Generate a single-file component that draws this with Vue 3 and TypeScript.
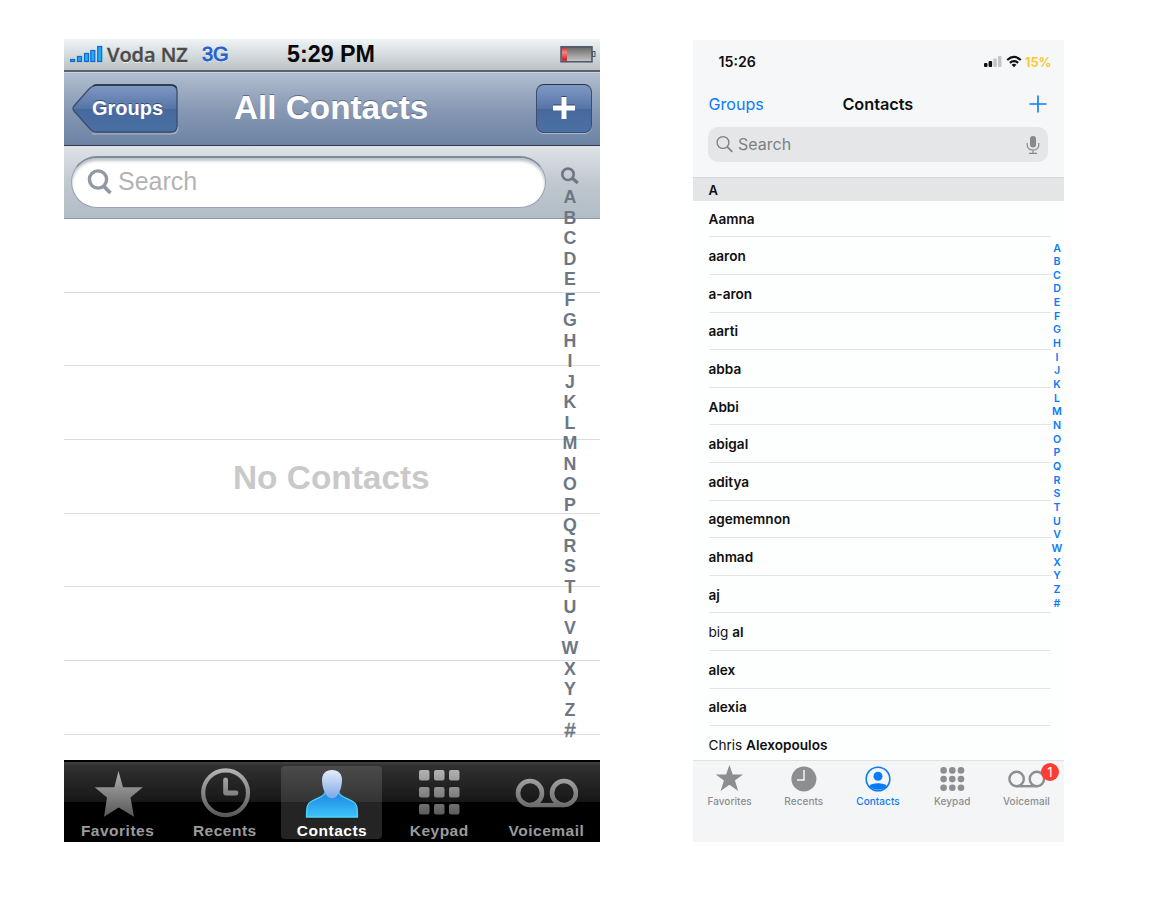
<script setup lang="ts">
interface Contact { first?: string; bold: string }

const letters: string[] = [...'ABCDEFGHIJKLMNOPQRSTUVWXYZ#']
const contacts: Contact[] = [
  { bold: 'Aamna' }, { bold: 'aaron' }, { bold: 'a-aron' }, { bold: 'aarti' },
  { bold: 'abba' }, { bold: 'Abbi' }, { bold: 'abigal' }, { bold: 'aditya' },
  { bold: 'agememnon' }, { bold: 'ahmad' }, { bold: 'aj' }, { first: 'big', bold: 'al' },
  { bold: 'alex' }, { bold: 'alexia' }, { first: 'Chris', bold: 'Alexopoulos' },
]
const tabs: string[] = ['Favorites', 'Recents', 'Contacts', 'Keypad', 'Voicemail']
const grid: number[] = [0, 1, 2, 3, 4, 5, 6, 7, 8]
</script>

<template>
  <main class="stage">
    <section class="classic">
      <header class="c-status">
        <svg class="c-bars" width="33" height="20" viewBox="0 0 33 20">
          <g fill="#1cabf5" stroke="#1668d0" stroke-width="1.200">
            <rect x=".6" y="14.500" width="4" height="2" /><rect x="7.500" y="11.500" width="4" height="5" />
            <rect x="14.500" y="8.500" width="4" height="8" /><rect x="20.800" y="5.500" width="4" height="11" />
            <rect x="27.700" y="1.500" width="4" height="15" />
          </g>
        </svg>
        <span class="c-carrier">Voda NZ</span>
        <span class="c-net">3G</span>
        <span class="c-time">5:29 PM</span>
        <svg class="c-batt" width="36" height="18" viewBox="0 0 36 18">
          <defs>
            <linearGradient id="bt" x1="0" y1="0" x2="0" y2="1"><stop offset="0" stop-color="#666" /><stop offset="1" stop-color="#c8c8c8" /></linearGradient>
            <linearGradient id="br" x1="0" y1="0" x2="0" y2="1"><stop offset="0" stop-color="#c33" /><stop offset=".35" stop-color="#e88" /><stop offset="1" stop-color="#c81818" /></linearGradient>
          </defs>
          <rect x="1" y="0.800" width="31" height="15" fill="url(#bt)" stroke="#4a5568" stroke-width="1.500" />
          <rect x="2" y="1.800" width="5" height="13" fill="url(#br)" />
          <rect x="32.500" y="5.500" width="2.500" height="5" fill="#ccd" stroke="#4a5568" />
        </svg>
      </header>

      <nav class="c-nav">
        <div class="c-back">
          <svg width="108" height="52" viewBox="0 0 108 52">
            <defs>
              <linearGradient id="bk" x1="0" y1="0" x2="0" y2="1">
                <stop offset="0" stop-color="#8099c3" /><stop offset=".5" stop-color="#5675a8" />
                <stop offset=".51" stop-color="#48689c" /><stop offset="1" stop-color="#4a70a5" />
              </linearGradient>
            </defs>
            <path d="M20 50H99Q106 50 106 43" fill="none" stroke="#a9b7cc" stroke-width="1.200" />
            <path d="M21 2Q23 1 25 1H99Q105 1 105 7V42Q105 48 99 48H25Q21 48 18 45L2 27Q0 24.500 2 22L17 5Q19 3 21 2Z" fill="url(#bk)" stroke="#3c4d6c" stroke-width="1.300" />
            <path d="M21 2Q23 1 25 1H99Q103 1 104.500 4" fill="none" stroke="#293547" stroke-width="1.600" />
          </svg>
          <span>Groups</span>
        </div>
        <h1>All Contacts</h1>
        <div class="c-add">
          <svg width="24" height="24" viewBox="0 0 24 24"><path d="M12 1V23M1 12H23" stroke="#30496f" stroke-width="5" transform="translate(0 -1)" /><path d="M12 1V23M1 12H23" stroke="#fff" stroke-width="5" /></svg>
        </div>
      </nav>

      <div class="c-search">
        <div class="c-field">
          <svg width="26" height="28" viewBox="0 0 26 28"><circle cx="11" cy="10.500" r="8.600" fill="none" stroke="#8f98a3" stroke-width="3.400" /><path d="M17 17.500L23.500 24" stroke="#8f98a3" stroke-width="3.800" /></svg>
          <span>Search</span>
        </div>
      </div>

      <div class="c-list">
        <div v-for="n in 7" :key="n" class="c-row"></div>
        <p>No Contacts</p>
      </div>

      <div class="c-index">
        <svg width="20" height="20" viewBox="0 0 20 20"><circle cx="8" cy="8.300" r="5.700" fill="none" stroke="#6d7783" stroke-width="2.600" /><path d="M12 12L17.800 17" stroke="#6d7783" stroke-width="3" /></svg>
        <span v-for="l in letters" :key="l" :class="{ hash: l === '#' }">{{ l }}</span>
      </div>

      <footer class="c-tabs">
        <div v-for="t in tabs" :key="t" class="c-tab" :class="{ on: t === 'Contacts' }">
          <svg width="64" height="54" viewBox="0 0 64 54">
            <defs>
              <linearGradient id="gr" gradientUnits="userSpaceOnUse" x1="0" y1="3" x2="0" y2="52"><stop offset="0" stop-color="#b4b4b4" /><stop offset="1" stop-color="#555" /></linearGradient>
              <linearGradient id="hd" x1="0" y1="0" x2="0" y2="1"><stop offset="0" stop-color="#e4edfb" /><stop offset="1" stop-color="#7fa6e6" /></linearGradient>
              <linearGradient id="bd" x1="0" y1="0" x2="0" y2="1"><stop offset="0" stop-color="#1b7fe0" /><stop offset="1" stop-color="#3cc4fb" /></linearGradient>
            </defs>
            <path v-if="t === 'Favorites'" fill="url(#gr)" d="M32.500 5L37 21.300H56.800L44.500 31.500L48 50.800L32.700 41.500L18 50.800L21 31.500L8.600 21.300H28.300Z" />
            <g v-else-if="t === 'Recents'" fill="none" stroke="url(#gr)">
              <circle cx="32.600" cy="26.700" r="22.400" stroke-width="4.200" />
              <path d="M32.600 14V27H43" stroke-width="4.800" stroke-linecap="round" stroke-linejoin="round" />
            </g>
            <g v-else-if="t === 'Contacts'">
              <path d="M25.500 25C25.500 30 19 31.500 12 35C7 37.500 6.500 41 6.500 51H57.500C57.500 41 57 37.500 52 35C45 31.500 38.500 30 38.500 25Z" fill="url(#bd)" stroke="#4cd4fa" stroke-width="1.300" />
              <path d="M32 4C38.500 4 42 8 42 14C42 21 39.500 27.500 36 31Q32 33.500 28 31C24.500 27.500 22 21 22 14C22 8 25.500 4 32 4Z" fill="url(#hd)" />
            </g>
            <g v-else-if="t === 'Keypad'" fill="url(#gr)">
              <path v-for="i in grid" :key="i" :d="`M${14 + (i % 3) * 15} ${4 + Math.floor(i / 3) * 17}h6.500q2 0 2 2v6.500q0 2-2 2h-6.500q-2 0-2-2v-6.500q0-2 2-2z`" />
            </g>
            <g v-else fill="none" stroke="url(#gr)" stroke-width="4.600">
              <circle cx="16" cy="27" r="12" /><circle cx="50" cy="27" r="12" /><path d="M16 39H50" />
            </g>
          </svg>
          <span>{{ t }}</span>
        </div>
      </footer>
    </section>

    <section class="modern">
      <header class="m-status">
        <span class="m-time">15:26</span>
        <svg width="39" height="14" viewBox="0 0 39 14">
          <g fill="#111"><rect x="0" y="8" width="3.500" height="4" rx="1" /><rect x="4.600" y="6" width="3.500" height="6" rx="1" /></g>
          <g fill="#c3c5c6"><rect x="9.300" y="3.500" width="3.500" height="8.500" rx="1" /><rect x="14" y="1" width="3.500" height="11" rx="1" /></g>
          <g fill="none" stroke="#111" stroke-width="2.300"><path d="M23.200 5Q30 -1.200 36.800 5" /><path d="M25.900 7.900Q30 4.300 34.100 7.900" /></g>
          <path d="M27.600 9.700Q30 7.700 32.400 9.700L30 12.200Z" fill="#111" />
        </svg>
        <span class="m-pct">15%</span>
      </header>
      <nav class="m-nav">
        <span class="m-groups">Groups</span>
        <h2>Contacts</h2>
        <svg width="18" height="18" viewBox="0 0 18 18"><path d="M9 .5V17.500M.5 9H17.500" stroke="#0b7bfa" stroke-width="1.600" /></svg>
      </nav>
      <div class="m-searchbar">
        <div class="m-search">
          <svg width="18" height="18" viewBox="0 0 18 18" fill="none" stroke="#808286" stroke-width="1.400"><circle cx="7" cy="7.500" r="5.900" /><path d="M11.300 11.800L16.300 16.800" stroke-width="1.700" /></svg>
          <span>Search</span>
          <svg class="m-mic" width="14" height="20" viewBox="0 0 14 20"><rect x="4" y="1" width="6" height="11.500" rx="3" fill="#88898d" /><path d="M1.200 8V9.500Q1.200 15 7 15Q12.800 15 12.800 9.500V8M7 15V18.300M3 18.300H11" fill="none" stroke="#88898d" stroke-width="1.200" /></svg>
        </div>
      </div>
      <div class="m-letter">A</div>
      <ul class="m-list">
        <li v-for="c in contacts" :key="c.bold"><span v-if="c.first">{{ c.first }}&nbsp;</span><b>{{ c.bold }}</b></li>
      </ul>
      <div class="m-index"><span v-for="l in letters" :key="l">{{ l }}</span></div>
      <footer class="m-tabs">
        <div v-for="t in tabs" :key="t" class="m-tab" :class="{ on: t === 'Contacts' }">
          <svg width="60" height="30" viewBox="0 0 60 30">
            <path v-if="t === 'Favorites'" fill="#8c8e8f" d="M29.400 1L32.700 10.400H43L34.900 16.500L38.200 27L29.400 20.700L20.600 27L23.900 16.500L15.800 10.400H26.100Z" />
            <g v-else-if="t === 'Recents'"><circle cx="29.900" cy="15" r="12.500" fill="#8c8e8f" /><path d="M30 6V16H23" fill="none" stroke="#f3f5f7" stroke-width="1.500" /></g>
            <g v-else-if="t === 'Contacts'" fill="#0b7bfa">
              <circle cx="30" cy="15" r="11.800" fill="none" stroke="#0b7bfa" stroke-width="1.600" />
              <circle cx="30" cy="12.300" r="4.500" />
              <path d="M21.300 22C23.500 18.300 36.500 18.300 38.700 22C36 27 24 27 21.300 22Z" />
            </g>
            <g v-else-if="t === 'Keypad'" fill="#8c8e8f"><circle v-for="i in grid" :key="i" :cx="21.600 + (i % 3) * 8.700" :cy="6.400 + Math.floor(i / 3) * 8.700" r="3.300" /></g>
            <g v-else fill="none" stroke="#8c8e8f" stroke-width="2.400"><circle cx="20.600" cy="15" r="7.200" /><circle cx="40.900" cy="15" r="7.200" /><path d="M20.600 22.200H40.900" /></g>
          </svg>
          <span>{{ t }}</span>
          <i v-if="t === 'Voicemail'" class="badge">1</i>
        </div>
      </footer>
    </section>
  </main>
</template>

<style>
body { background: #fff; }
</style>

<style scoped>
* { box-sizing: border-box; }
h1, h2, p, ul { margin: 0; padding: 0; }
svg { display: block; flex: none; }
span { white-space: nowrap; }
.stage { display: flex; align-items: flex-start; gap: 93px; height: 901px; padding: 39px 0 0 64px; overflow: hidden; }

.classic { position: relative; display: flex; flex-direction: column; width: 536px; height: 803px; font-family: "Liberation Sans", Arial, sans-serif; background: #fff; }
.c-status { position: relative; display: flex; align-items: center; height: 33px; padding: 2px 4px 2px 6px; background: linear-gradient(#eff4f6, #bac2c5); border-bottom: 2px solid #5a636b; }
.c-carrier { margin-left: 4px; width: 95px; font: 600 20px "Open Sans", sans-serif; letter-spacing: -.05px; color: #4a4a4a; -webkit-text-stroke: .4px #4a4a4a; text-shadow: 0 1px #fff; }
.c-net { font-size: 20px; color: #2460cf; -webkit-text-stroke: .8px #2460cf; text-shadow: 0 1px #fff; }
.c-time { position: absolute; left: 0; right: 2px; text-align: center; font-size: 23.300px; font-weight: bold; color: #080808; }
.c-batt { margin-left: auto; }
.c-nav { position: relative; display: flex; align-items: center; justify-content: space-between; height: 74px; padding: 0 8px; background: linear-gradient(#b1bed0, #8899b4 50%, #6c83a5); border-top: 1px solid #cdd6e0; border-bottom: 1.500px solid #343d4d; }
.c-back { position: relative; margin-top: 2px; }
.c-back span { position: absolute; left: 20px; top: 13px; font-size: 20px; line-height: 23px; font-weight: bold; color: #fff; text-shadow: 0 -1px #344c75; }
.c-nav h1 { position: absolute; left: 170px; top: 15px; font-size: 33.300px; line-height: 40px; font-weight: bold; color: #fff; text-shadow: 0 -1.500px #5f6d83; white-space: nowrap; }
.c-add { display: grid; place-items: center; width: 56px; height: 49px; margin-bottom: 2px; border: 1.500px solid #3b4e70; border-top-color: #293547; border-radius: 8px; background: linear-gradient(#8099c3, #5675a8 50%, #48689c 51%, #4a70a5); box-shadow: 0 1px #a9b7cc; }
.c-search { height: 73px; padding: 10px 54px 0 7px; background: linear-gradient(#dfe3e6, #c0c8d0 50%, #b1bcc4); border-bottom: 1.500px solid #8c9aa7; }
.c-field { display: flex; align-items: center; height: 52px; padding: 0 0 3px 15px; border: 1.500px solid #97a3b1; border-top: 2px solid #7d8a9b; border-radius: 26px; background: #fff; box-shadow: inset 0 3px 3px #bfc4ca; }
.c-field svg { margin-top: 4px; }
.c-field span { margin-left: 5px; font-size: 25px; color: #b3b3b3; }
.c-list { position: relative; height: 541px; overflow: hidden; }
.c-row { height: 73.700px; border-bottom: 1.500px solid #dcdcdc; }
.c-list p { position: absolute; left: 169px; top: 239px; font-size: 33.400px; line-height: 40px; font-weight: bold; color: #c9c9c9; }
.c-index { position: absolute; left: 496px; top: 127px; width: 20px; display: flex; flex-direction: column; align-items: center; color: #6d7783; font-size: 17.800px; font-weight: bold; }
.c-index svg { margin-bottom: 1px; }
.c-index span { height: 20.500px; line-height: 20.500px; }
.c-index .hash { font-size: 20px; font-weight: normal; -webkit-text-stroke: .5px #6d7783; }
.c-tabs { display: flex; flex: 1; padding-top: 4px; border-top: 2px solid #000; background: linear-gradient(#414141 0, #303030 4px, #171717 40px, #000 40px); }
.c-tab { position: relative; z-index: 0; display: flex; flex: 1 1 0; min-width: 0; flex-direction: column; align-items: center; color: #9b9b9b; }
.c-tab.on { color: #fff; }
.c-tab.on::before { content: ""; position: absolute; z-index: -1; inset: 0 4px 3px 3px; border-radius: 4px; background: linear-gradient(#4a4a4a, #343434 36px, #242424 36px); }
.c-tab span { margin-top: 2px; font-size: 15.500px; line-height: 18px; font-weight: bold; letter-spacing: .5px; }

.modern { position: relative; display: flex; flex-direction: column; width: 371px; height: 802px; margin-top: 1px; background: #fdfefe; font-family: Inter, sans-serif; color: #101010; }
.m-status { display: flex; align-items: center; height: 43px; padding: 0 11px 0 25.500px; background: #f5f7f8; }
.m-time { flex: 1; font-size: 14.200px; font-weight: 600; }
.m-pct { width: 28px; margin-left: 2px; font-size: 13px; font-weight: 600; letter-spacing: -.1px; color: #fac62c; }
.m-nav { display: grid; grid-template-columns: 1fr auto 1fr; align-items: center; height: 43px; padding: 0 17px 2px 15.500px; background: #f5f7f8; }
.m-nav h2 { font-size: 16.300px; font-weight: 600; letter-spacing: -.05px; }
.m-nav svg { justify-self: end; }
.m-groups { font-size: 16.100px; color: #0b7bfa; }
.m-searchbar { height: 51px; padding: 1px 16px 0 15px; background: #f5f7f8; }
.m-search { display: flex; align-items: center; height: 35px; border-radius: 10px; padding: 0 8.500px 1px 8px; background: #e5e6e8; color: #7e8084; font-size: 16px; }
.m-search span { margin-left: 4px; }
.m-mic { margin: 1px 0 0 auto; }
.m-letter { height: 24px; padding-left: 15.500px; border-top: 1px solid #d4d6d7; background: #e4e5e7; font-size: 13px; line-height: 24px; font-weight: 600; }
.m-list { height: 559px; overflow: hidden; list-style: none; padding-left: 15.500px; font-size: 13.600px; }
.m-list li { display: flex; align-items: center; width: 342px; height: 37.600px; border-bottom: 1.200px solid #e2e5e5; padding-top: 1px; }
.m-list li:first-child { height: 36.400px; padding: 0; }
.m-list b { font-weight: 600; }
.m-index { position: absolute; left: 357px; top: 201.500px; width: 14px; display: flex; flex-direction: column; align-items: center; font-size: 10.600px; font-weight: 600; color: #0b7bfa; }
.m-index span { height: 13.670px; line-height: 13.670px; }
.m-tabs { display: flex; flex: 1; border-top: 1.500px solid #dfe2e3; background: #f3f5f7; padding-top: 3px; }
.m-tab { position: relative; left: -.5px; display: flex; flex: 1 1 0; min-width: 0; flex-direction: column; align-items: center; color: #8c8e8f; font-size: 10px; }
.m-tab span { margin-top: 1px; line-height: 13px; font-weight: 500; letter-spacing: .05px; }
.m-tab.on { color: #0b7bfa; }
.badge { position: absolute; left: 51.500px; top: -1px; width: 18px; height: 18px; border-radius: 50%; background: #fc3d33; color: #fff; font-size: 13px; line-height: 18px; font-style: normal; text-align: center; }
</style>
